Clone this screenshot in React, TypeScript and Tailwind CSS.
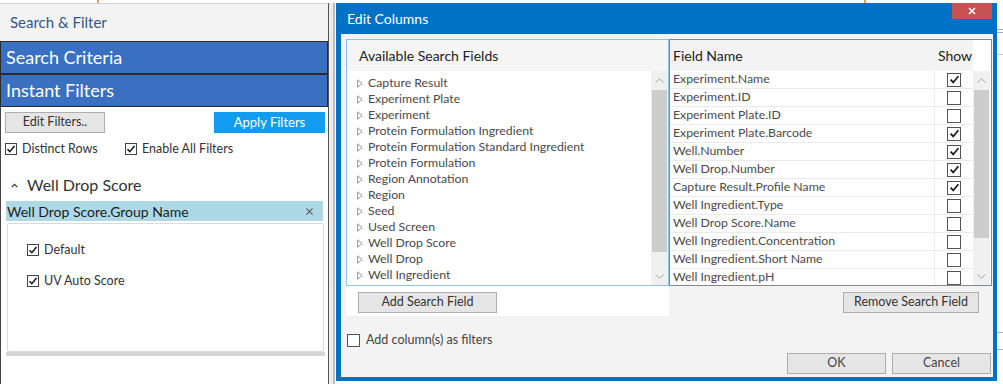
import React from 'react'

const searchFields = [
  'Capture Result',
  'Experiment Plate',
  'Experiment',
  'Protein Formulation Ingredient',
  'Protein Formulation Standard Ingredient',
  'Protein Formulation',
  'Region Annotation',
  'Region',
  'Seed',
  'Used Screen',
  'Well Drop Score',
  'Well Drop',
  'Well Ingredient',
]

const columns = [
  { name: 'Experiment.Name', show: true },
  { name: 'Experiment.ID', show: false },
  { name: 'Experiment Plate.ID', show: false },
  { name: 'Experiment Plate.Barcode', show: true },
  { name: 'Well.Number', show: true },
  { name: 'Well Drop.Number', show: true },
  { name: 'Capture Result.Profile Name', show: true },
  { name: 'Well Ingredient.Type', show: false },
  { name: 'Well Drop Score.Name', show: false },
  { name: 'Well Ingredient.Concentration', show: false },
  { name: 'Well Ingredient.Short Name', show: false },
  { name: 'Well Ingredient.pH', show: false },
]

function CheckBox({ checked, big }: { checked: boolean; big?: boolean }) {
  return (
    <span
      className={`flex shrink-0 items-center justify-center bg-white border ${
        big ? 'w-[14px] h-[14px] border-[#555]' : 'w-[12px] h-[12px] border-[#444]'
      }`}
    >
      {checked && (
        <svg viewBox="0 0 12 12" className={big ? 'w-[11px] h-[11px]' : 'w-[10px] h-[10px]'}>
          <path d="M1.8 6.2 L4.6 9.2 L10.2 2.4" fill="none" stroke="#1a1a1a" strokeWidth="1.9" />
        </svg>
      )}
    </span>
  )
}

function Btn({ children, className = '' }: { children: React.ReactNode; className?: string }) {
  return (
    <div
      className={`flex items-center justify-center h-[21px] border border-[#adadad] bg-[#e6e6e6] text-[12.5px] text-[#333] ${className}`}
    >
      {children}
    </div>
  )
}

function Arrow({ up }: { up?: boolean }) {
  return (
    <svg viewBox="0 0 9 5" className="w-[9px] h-[5px]">
      <path d={up ? 'M0.5 4.5 L4.5 0.8 L8.5 4.5' : 'M0.5 0.5 L4.5 4.2 L8.5 0.5'} fill="none" stroke="#a6a6a6" strokeWidth="1" />
    </svg>
  )
}

function ScrollBar({ thumb }: { thumb: string }) {
  return (
    <div className="w-[17px] shrink-0 flex flex-col bg-[#f0f0f0]">
      <div className="h-[19px] flex items-center justify-center">
        <Arrow up />
      </div>
      <div className={`${thumb} mx-[1px] bg-[#cdcdcd]`} />
      <div className="flex-1" />
      <div className="h-[17px] flex items-center justify-center">
        <Arrow />
      </div>
    </div>
  )
}

function LeftPanel() {
  return (
    <div className="w-[329px] h-full flex flex-col border-r border-[#555]">
      <div className="h-[38px] shrink-0 bg-[#f3f3f3] border-t border-[#cfcfcf] flex items-center pl-[10px] text-[15px] text-[#34558b]">
        Search &amp; Filter
      </div>
      <div className="h-[33px] shrink-0 bg-[#3a70c1] border border-[#2b2b2b] flex items-center pl-[5px] text-[18px] text-white">
        Search Criteria
      </div>
      <div className="h-[33px] shrink-0 bg-[#3a70c1] border border-[#2b2b2b] flex items-center pl-[5px] text-[18px] text-white">
        Instant Filters
      </div>
      <div className="flex-1 bg-white border-l border-[#444] flex flex-col">
        <div className="mt-[5px] flex items-center justify-between pl-[4px] pr-[3px]">
          <Btn className="w-[100px]">Edit Filters..</Btn>
          <div className="w-[111px] h-[21px] bg-[#129cf0] flex items-center justify-center text-[13px] text-white">
            Apply Filters
          </div>
        </div>
        <div className="mt-[10px] h-[12px] flex items-center pl-[4px] text-[12.5px] text-[#333]">
          <div className="w-[120px] flex items-center gap-[5px]">
            <CheckBox checked />
            <span>Distinct Rows</span>
          </div>
          <div className="flex items-center gap-[5px]">
            <CheckBox checked />
            <span>Enable All Filters</span>
          </div>
        </div>
        <div className="mt-[20px] h-[20px] flex items-center pl-[10px]">
          <svg viewBox="0 0 8 5" className="w-[7px] h-[5px]">
            <path d="M0.8 4.4 L4 1.2 L7.2 4.4" fill="none" stroke="#333" strokeWidth="1.4" />
          </svg>
          <span className="ml-[9px] text-[16px] text-[#333]">Well Drop Score</span>
        </div>
        <div className="mt-[6px] ml-[5px] w-[317px] h-[20px] bg-[#add8e6] flex items-center justify-between pl-[1px] pr-[10px] text-[14px] text-[#1c1c1c]">
          <span>Well Drop Score.Group Name</span>
          <svg viewBox="0 0 8 8" className="w-[7px] h-[7px]">
            <path d="M0.5 0.5 L7.5 7.5 M7.5 0.5 L0.5 7.5" stroke="#555" strokeWidth="1.2" />
          </svg>
        </div>
        <div className="mt-[2px] ml-[6px] w-[317px] h-[129px] border border-[#dadada] rounded-[2px] bg-white flex flex-col pl-[19px] text-[12.5px] text-[#333]">
          <div className="mt-[20px] h-[12px] flex items-center gap-[5px]">
            <CheckBox checked />
            <span>Default</span>
          </div>
          <div className="mt-[19px] h-[12px] flex items-center gap-[5px]">
            <CheckBox checked />
            <span>UV Auto Score</span>
          </div>
        </div>
        <div className="ml-[5px] w-[319px] h-[4px] bg-[#d6d6d6]" />
      </div>
    </div>
  )
}

function EditColumnsDialog() {
  return (
    <div className="w-[661px] h-[378px] shrink-0 bg-[#0072c6] flex flex-col pl-[5px] pr-[4px] pb-[4px]">
      <div className="h-[31px] shrink-0 flex items-start justify-between">
        <span className="self-center pl-[6px] text-[14px] text-white">Edit Columns</span>
        <div className="mr-[1px] w-[40px] h-[16px] bg-[#c75050] flex items-center justify-center">
          <svg viewBox="0 0 8 8" className="w-[8px] h-[8px]">
            <path d="M1 1 L7 7 M7 1 L1 7" stroke="white" strokeWidth="1.6" />
          </svg>
        </div>
      </div>
      <div className="flex-1 min-h-0 bg-[#f3f3f3] flex flex-col">
        <div className="pt-[5px] pl-[5px] flex">
          {/* available fields */}
          <div className="w-[323px] flex flex-col bg-white">
            <div className="h-[247px] border border-[#8fc3ea] flex flex-col">
              <div className="h-[31px] shrink-0 bg-[#f5f5f5] flex items-center pl-[12px] text-[14px] text-[#222]">
                Available Search Fields
              </div>
              <div className="flex-1 flex min-h-0">
                <div className="flex-1 pt-[4px] flex flex-col">
                  {searchFields.map((f) => (
                    <div key={f} className="h-[16px] flex items-center pl-[10px] text-[12.3px] text-[#4a4a4a]">
                      <svg viewBox="0 0 6 9" className="w-[6px] h-[9px]">
                        <path d="M0.6 0.8 L5.2 4.5 L0.6 8.2 Z" fill="none" stroke="#8a8a8a" strokeWidth="0.9" />
                      </svg>
                      <span className="ml-[5px]">{f}</span>
                    </div>
                  ))}
                </div>
                <ScrollBar thumb="h-[162px]" />
              </div>
            </div>
            <div className="h-[30px] pl-[12px] pt-[6px]">
              <Btn className="w-[139px]">Add Search Field</Btn>
            </div>
          </div>

          {/* selected columns */}
          <div className="w-[323px] flex flex-col">
            <div className="h-[247px] border border-[#828790] bg-white flex flex-col">
              <div className="h-[31px] shrink-0 flex">
                <div className="w-[303px] bg-[#f3f3f3] flex items-center text-[14px] text-[#222]">
                  <span className="w-[265px] pl-[3px]">Field Name</span>
                  <span className="pl-[3px]">Show</span>
                </div>
              </div>
              <div className="flex-1 flex min-h-0">
                <div className="w-[303px] flex flex-col overflow-hidden">
                  {columns.map((c) => (
                    <div key={c.name} className="h-[18px] shrink-0 flex border-b border-[#ebebeb]">
                      <div className="w-[265px] pl-[3px] flex items-center border-r border-[#ebebeb] text-[12.3px] text-[#4a4a4a]">
                        {c.name}
                      </div>
                      <div className="flex-1 flex items-center justify-center">
                        <CheckBox checked={c.show} big />
                      </div>
                    </div>
                  ))}
                </div>
                <ScrollBar thumb="h-[148px]" />
              </div>
            </div>
            <div className="mt-[6px] flex justify-end pr-[13px]">
              <Btn className="w-[136px]">Remove Search Field</Btn>
            </div>
          </div>
        </div>

        <div className="mt-[18px] h-[13px] pl-[6px] flex items-center text-[12.5px] text-[#444]">
          <span className="w-[13px] h-[13px] shrink-0 border border-[#555] bg-white" />
          <span className="ml-[6px]">Add column(s) as filters</span>
        </div>
        <div className="mt-[6px] flex justify-end gap-[6px] pr-[2px]">
          <Btn className="w-[99px] text-[#444]">OK</Btn>
          <Btn className="w-[99px] text-[#444]">Cancel</Btn>
        </div>
      </div>
    </div>
  )
}

export default function App() {
  return (
    <div className="w-[1003px] h-[384px] overflow-hidden bg-white flex flex-col font-[Lato,sans-serif] text-[#333]">
      <div className="h-[3px] shrink-0 flex">
        <div className="ml-[97px] w-[2px] bg-[#e8a04a]" />
        <div className="ml-[765px] w-[2px] bg-[#e8a04a]" />
      </div>
      <div className="flex-1 flex min-h-0">
        <LeftPanel />
        <div className="w-[7px] shrink-0 flex">
          <div className="w-[4px] bg-[#ececec]" />
          <div className="w-[2px] bg-[#bdbdbd]" />
          <div className="w-[1px] bg-white" />
        </div>
        <EditColumnsDialog />
        <div className="flex-1 flex flex-col">
          <div className="h-[26px]" />
          <div className="h-px bg-[#a8a8a8]" />
          <div className="h-[2px]" />
          <div className="h-px bg-[#a8a8a8]" />
          <div className="h-[21px]" />
          <div className="h-px bg-[#c8c8c8]" />
          <div className="h-[277px]" />
          <div className="h-px bg-[#b0b0b0]" />
          <div className="h-[16px]" />
          <div className="h-px bg-[#b0b0b0]" />
        </div>
      </div>
    </div>
  )
}
